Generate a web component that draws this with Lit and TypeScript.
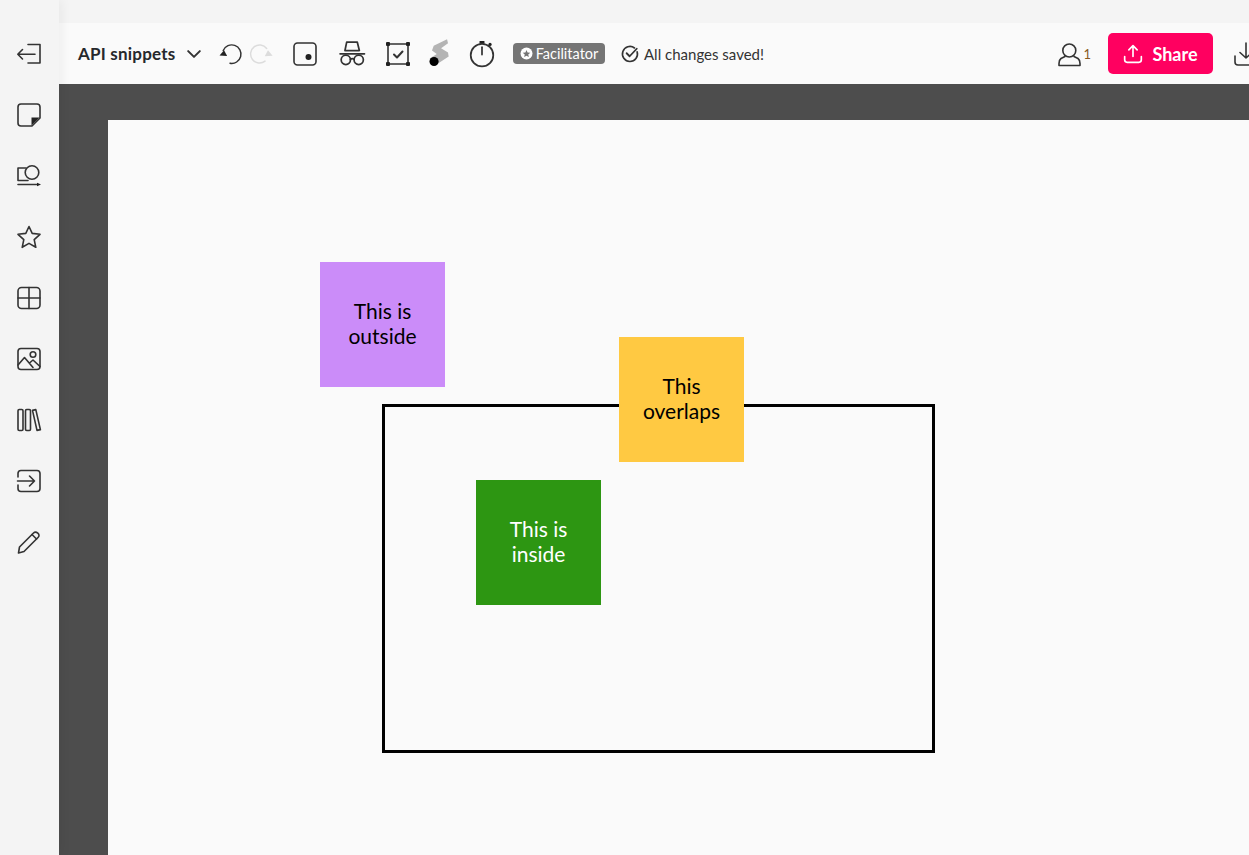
import { LitElement, css, html, svg } from "lit";
import { customElement } from "lit/decorators.js";

const icon = (size: number, body: unknown, cls = "") =>
  html`<svg class="ic ${cls}" width=${size} height=${size} viewBox="0 0 24 24">${body}</svg>`;

const railIcons = [
  svg`<path d="M11 2.5H23V21H11M.8 12.2H18M5.5 7.5.8 12.2 5.5 17"/>`,
  svg`<path d="M4 1H20Q23 1 23 4V15L15 23H4Q1 23 1 20V4Q1 1 4 1Z"/><path class="solid" d="M14.5 14.5H22.5L14.5 22.5Z"/>`,
  svg`<path d="M9 4H1V16.5H11M1 20.5H21"/><circle cx="15" cy="8.5" r="6.8"/><path class="solid" d="M20 18.7 24 20.5 20 22.3Z"/>`,
  svg`<path d="M12 1.5 15.2 8.4 23 9.3 17.2 14.6 18.8 22.3 12 18.4 5.2 22.3 6.8 14.6 1 9.3 8.8 8.4Z"/>`,
  svg`<rect x="1" y="1.5" width="22" height="21" rx="3.5"/><path d="M12 1.5V22.5M1 12H23"/>`,
  svg`<rect x="1" y="1.5" width="22" height="21" rx="3"/><circle cx="16" cy="7.5" r="2.8"/><path d="M1 18 7.5 10.5 16 20.5M12.5 16 16 13 23 19.5"/>`,
  svg`<rect x="1" y="1.5" width="5" height="21" rx="1.2"/><rect x="8.5" y="1.5" width="5" height="21" rx="1.2"/><path d="M15.5 2.4 18.8 1.6 23.4 21.6 20 22.4Z"/>`,
  svg`<path d="M1 8V4.5Q1 1.5 4 1.5H20Q23 1.5 23 4.5V19.5Q23 22.5 20 22.5H4Q1 22.5 1 19.5V16M.5 12H17.5M12.5 7 17.5 12 12.5 17"/>`,
  svg`<path d="M2.5 17 16.5 3Q18.5 1 20.8 3.2T21 7.5L7 21.5 1.5 23Z"/><path d="M15 4.5 19.5 9"/>`,
];

const undo = svg`<path d="M12 22.1A10.1 10.1 0 1 0 4.6 8.2"/><path class="solid" d="M.6 13.6 8.9 14.2 5.5 8Z"/>`;
const redo = svg`<path d="M15.3 19.8A9.8 9.8 0 1 1 17.1 6"/><path class="solid" d="M23.6 13.8 15 14.4 18.5 8Z"/>`;

@customElement("app-root")
export class AppRoot extends LitElement {
  static styles = css`
    :host {
      display: flex;
      width: 100%;
      height: 855px;
      overflow: hidden;
      background: #f4f4f4;
      font-family: "Lato", "Liberation Sans", sans-serif;
      color: #272727;
    }
    .ic {
      flex: none;
      display: block;
      fill: none;
      overflow: visible;
      stroke: #333;
      stroke-width: 1.6;
      stroke-linecap: round;
      stroke-linejoin: round;
    }
    .ic .solid {
      fill: #222;
      stroke: none;
    }
    .ic.faded {
      stroke: #dcdcdc;
    }
    .ic.faded .solid {
      fill: #dcdcdc;
    }
    .rail {
      flex: none;
      width: 59px;
      padding: 23px 2px 0 0;
      box-sizing: border-box;
      position: relative;
      z-index: 1;
      box-shadow: 3px 0 10px rgba(0, 0, 0, 0.05);
    }
    .rail-item {
      height: 61px;
      display: flex;
      align-items: center;
      justify-content: center;
    }
    .main {
      flex: 1;
      min-width: 0;
      margin-top: 23px;
      display: flex;
      flex-direction: column;
    }
    .toolbar {
      flex: none;
      height: 61px;
      background: #fafafa;
      display: flex;
      align-items: center;
      padding-left: 19px;
      white-space: nowrap;
    }
    .board-name {
      font-size: 17px;
      font-weight: 700;
      letter-spacing: 0.2px;
      color: #26282c;
      width: 97px;
      margin-right: 12px;
    }
    .chevron {
      margin-right: 18px;
    }
    .undo {
      margin-right: 10px;
    }
    .redo {
      margin-right: 20px;
    }
    .sticky {
      margin-right: 22px;
    }
    .spy {
      margin-right: 21px;
    }
    .task {
      margin-right: 17px;
    }
    .comet {
      margin-right: 16px;
    }
    .timer {
      margin-right: 18px;
    }
    .badge {
      height: 21px;
      width: 92px;
      box-sizing: border-box;
      border-radius: 4px;
      background: #757575;
      color: #fff;
      font-size: 14.5px;
      display: flex;
      align-items: center;
      justify-content: center;
      gap: 3px;
      margin-right: 16px;
      margin-top: -1px;
    }
    .saved {
      display: flex;
      align-items: center;
      gap: 5px;
      font-size: 15px;
      color: #333;
    }
    .right {
      margin-left: auto;
      margin-right: -9px;
      display: flex;
      align-items: center;
      flex: none;
    }
    .users {
      font-size: 13px;
      color: #8a5a1e;
      margin-left: 2px;
      margin-right: 17px;
    }
    .share {
      width: 105px;
      height: 41px;
      border-radius: 5px;
      background: #ff0060;
      color: #fff;
      font-size: 18px;
      font-weight: 700;
      display: flex;
      align-items: center;
      justify-content: center;
      gap: 9px;
      margin-right: 21px;
    }
    .stage {
      flex: 1;
      background: #4d4d4d;
      padding: 36px 0 0 49px;
      min-height: 0;
    }
    .canvas {
      position: relative;
      height: 100%;
      background: #fafafa;
    }
    .frame {
      position: absolute;
      left: 274px;
      top: 284px;
      width: 553px;
      height: 349px;
      box-sizing: border-box;
      border: 3px solid #000;
    }
    .note {
      position: absolute;
      width: 125px;
      height: 125px;
      box-sizing: border-box;
      padding-bottom: 3px;
      display: flex;
      align-items: center;
      justify-content: center;
      text-align: center;
      font-size: 21px;
      line-height: 25px;
      color: #000;
    }
    .outside {
      left: 212px;
      top: 142px;
      background: #cb8cf9;
    }
    .overlaps {
      left: 511px;
      top: 217px;
      background: #ffc942;
    }
    .inside {
      left: 368px;
      top: 360px;
      background: #2d9612;
      color: #fff;
    }
  `;

  render() {
    return html`
      <nav class="rail">
        ${railIcons.map((body) => html`<div class="rail-item">${icon(24, body)}</div>`)}
      </nav>
      <div class="main">
        <header class="toolbar">
          <span class="board-name">API snippets</span>
          ${icon(14, svg`<path stroke-width="3.4" d="M2 7 12 17 22 7"/>`, "chevron")}
          ${icon(22, undo, "undo")}
          ${icon(22, redo, "faded redo")}
          ${icon(24, svg`<rect x="1" y="1" width="22" height="22" rx="3.5"/><circle class="solid" cx="15.5" cy="15" r="3"/>`, "sticky")}
          ${icon(26, svg`<path d="M7.1 1.1H16.9L18.8 8.8H5.5ZM1 11.8H23.5"/><circle cx="6.3" cy="17.4" r="4.3"/><circle cx="18.2" cy="17.4" r="4.3"/><path d="M10.5 17Q12.2 15.6 14 17"/>`, "spy")}
          ${icon(24, svg`<rect x="2" y="2" width="20" height="20"/><path stroke-width="2" d="M8 12.5 11 15.5 16.5 9.5"/><g class="solid"><rect x="0" y="0" width="4" height="4" rx="1"/><rect x="20" y="0" width="4" height="4" rx="1"/><rect x="0" y="20" width="4" height="4" rx="1"/><rect x="20" y="20" width="4" height="4" rx="1"/></g>`, "task")}
          ${icon(26, svg`<path fill="#b4b4b4" stroke="none" d="M18.5-1.7 19.4 2 13 6.8 19.4 10.6 20 14.3 7.4 22.6 2.8 15.9 9 12 4.6 8.7 6.2 4.4Z"/><circle class="solid" style="fill:#000" cx="6.5" cy="18.9" r="4.2"/>`, "comet")}
          ${icon(26, svg`<circle cx="12" cy="13.1" r="10.4"/><path d="M12 5.7V12.5"/><rect class="solid" x="9.7" y="0" width="4.6" height="2.4" rx=".5"/><circle class="solid" cx="19.4" cy="3.2" r="1.5"/>`, "timer")}
          <span class="badge">
            ${html`<svg width="13" height="13" viewBox="0 0 24 24"><circle cx="12" cy="12" r="11" fill="#fff"/><path fill="#757575" d="M12 5.5 14 10 19 10.5 15.2 13.7 16.4 18.5 12 16 7.6 18.5 8.8 13.7 5 10.5 10 10Z"/></svg>`}
            Facilitator
          </span>
          <span class="saved">
            ${icon(18, svg`<path stroke-width="2.2" d="M21.5 9A10 10 0 1 1 18 4"/><path stroke-width="2.4" d="M7.5 11 11.5 15 21 5"/>`)}
            All changes saved!
          </span>
          <div class="right">
            ${icon(24, svg`<circle cx="12.3" cy="8.5" r="6.5"/><path d="M8 14.5 4 16.5Q2 18 2 21.5V23.5H23V21.5Q23 18 21 16.5L17 14.5"/>`)}
            <span class="users">1</span>
            <div class="share">
              ${icon(20, svg`<g style="stroke:#fff;stroke-width:2"><path d="M12 15V2M7 7 12 2 17 7M2 15V19Q2 22 5 22H19Q22 22 22 19V15"/></g>`)}
              Share
            </div>
            ${icon(24, svg`<path d="M12 1V16M6 10.5 12 16 18 10.5M1 14V20Q1 23 4 23H20Q23 23 23 20V14"/>`)}
          </div>
        </header>
        <section class="stage">
          <div class="canvas">
            <div class="frame"></div>
            <div class="note outside">This is<br />outside</div>
            <div class="note overlaps">This<br />overlaps</div>
            <div class="note inside">This is<br />inside</div>
          </div>
        </section>
      </div>
    `;
  }
}
